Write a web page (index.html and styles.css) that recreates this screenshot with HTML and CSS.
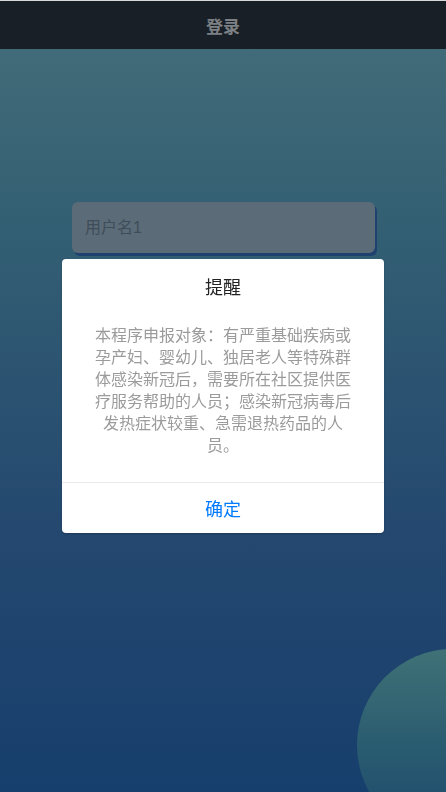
FILE: index.html
```html
<!DOCTYPE html>
<html lang="zh-CN">
<head>
  <meta charset="UTF-8" />
  <meta name="viewport" content="width=device-width, initial-scale=1.0"/>
  <title>登录</title>
  <link rel="stylesheet" href="styles.css">
</head>
<body>
  <div class="page">
    <header class="nav-bar">登录</header>

    <main class="login-area">
      <div class="login-form">
        <input type="text" class="login-input" placeholder="用户名1"/>
      </div>
      <div class="deco-circle"></div>
    </main>
  </div>

  <!-- 提醒弹窗 -->
  <div class="modal-mask">
    <div class="modal">
      <div class="modal-title">提醒</div>
      <div class="modal-content">
        本程序申报对象：有严重基础疾病或孕产妇、婴幼儿、独居老人等特殊群体感染新冠后，需要所在社区提供医疗服务帮助的人员；感染新冠病毒后发热症状较重、急需退热药品的人员。
      </div>
      <div class="modal-footer">
        <button class="modal-btn">确定</button>
      </div>
    </div>
  </div>
</body>
</html>
```

FILE: styles.css
```css
:root {
  --nav-bg: #181f26;
  --nav-text: #7d8084;
  --bg-top: #416b78;
  --bg-bottom: #173f6d;
  --primary: #007aff;
}
html, body {
  margin: 0;
  padding: 0;
  height: 100%;
}
body {
  font-family: "Liberation Sans", "Noto Sans CJK SC", sans-serif;
  background: var(--bg-bottom);
  overflow: hidden;
}
.page {
  height: 100%;
  display: flex;
  flex-direction: column;
}
.nav-bar {
  height: 49px;
  border-top: 1px solid #d8d8d8;
  box-sizing: border-box;
  background: var(--nav-bg);
  color: var(--nav-text);
  font-size: 17px;
  font-weight: bold;
  display: flex;
  align-items: center;
  justify-content: center;
  flex-shrink: 0;
}
.login-area {
  flex: 1;
  position: relative;
  overflow: hidden;
  background: linear-gradient(180deg, var(--bg-top) 0%, #325e73 26%, #24486f 65%, var(--bg-bottom) 100%);
}
.login-form {
  padding: 153px 71px 0 72px;
}
.login-input {
  display: block;
  width: 100%;
  height: 51px;
  box-sizing: border-box;
  border: none;
  border-radius: 6px;
  background: #5b6b78;
  box-shadow: 2px 3px 0 #1e4170;
  padding: 0 13px;
  font-family: "Liberation Sans", "Noto Sans CJK SC", sans-serif;
  font-size: 16px;
  color: #3f4e5a;
  outline: none;
}
.login-input::placeholder {
  color: #3f4d59;
}
.deco-circle {
  position: absolute;
  width: 192px;
  height: 192px;
  border-radius: 50%;
  right: -103px;
  bottom: -49px;
  background: linear-gradient(180deg, #3f7176 0%, #285a70 55%, #1d476d 100%);
}
.modal-mask {
  position: fixed;
  inset: 0;
  display: flex;
  align-items: center;
  justify-content: center;
}
.modal {
  width: 322px;
  background: #fff;
  border-radius: 4px;
  overflow: hidden;
  box-shadow: 0 1px 2px rgba(0, 0, 0, 0.2);
}
.modal-title {
  padding-top: 16px;
  text-align: center;
  font-size: 18px;
  line-height: 26px;
  color: #222;
}
.modal-content {
  padding: 24px 30px 25px;
  text-align: center;
  font-size: 16px;
  line-height: 22px;
  color: #9b9b9b;
}
.modal-footer {
  border-top: 1px solid #ececec;
}
.modal-btn {
  display: block;
  width: 100%;
  height: 50px;
  padding: 0;
  border: none;
  background: none;
  font-family: inherit;
  font-size: 18px;
  color: var(--primary);
  cursor: pointer;
}
```
